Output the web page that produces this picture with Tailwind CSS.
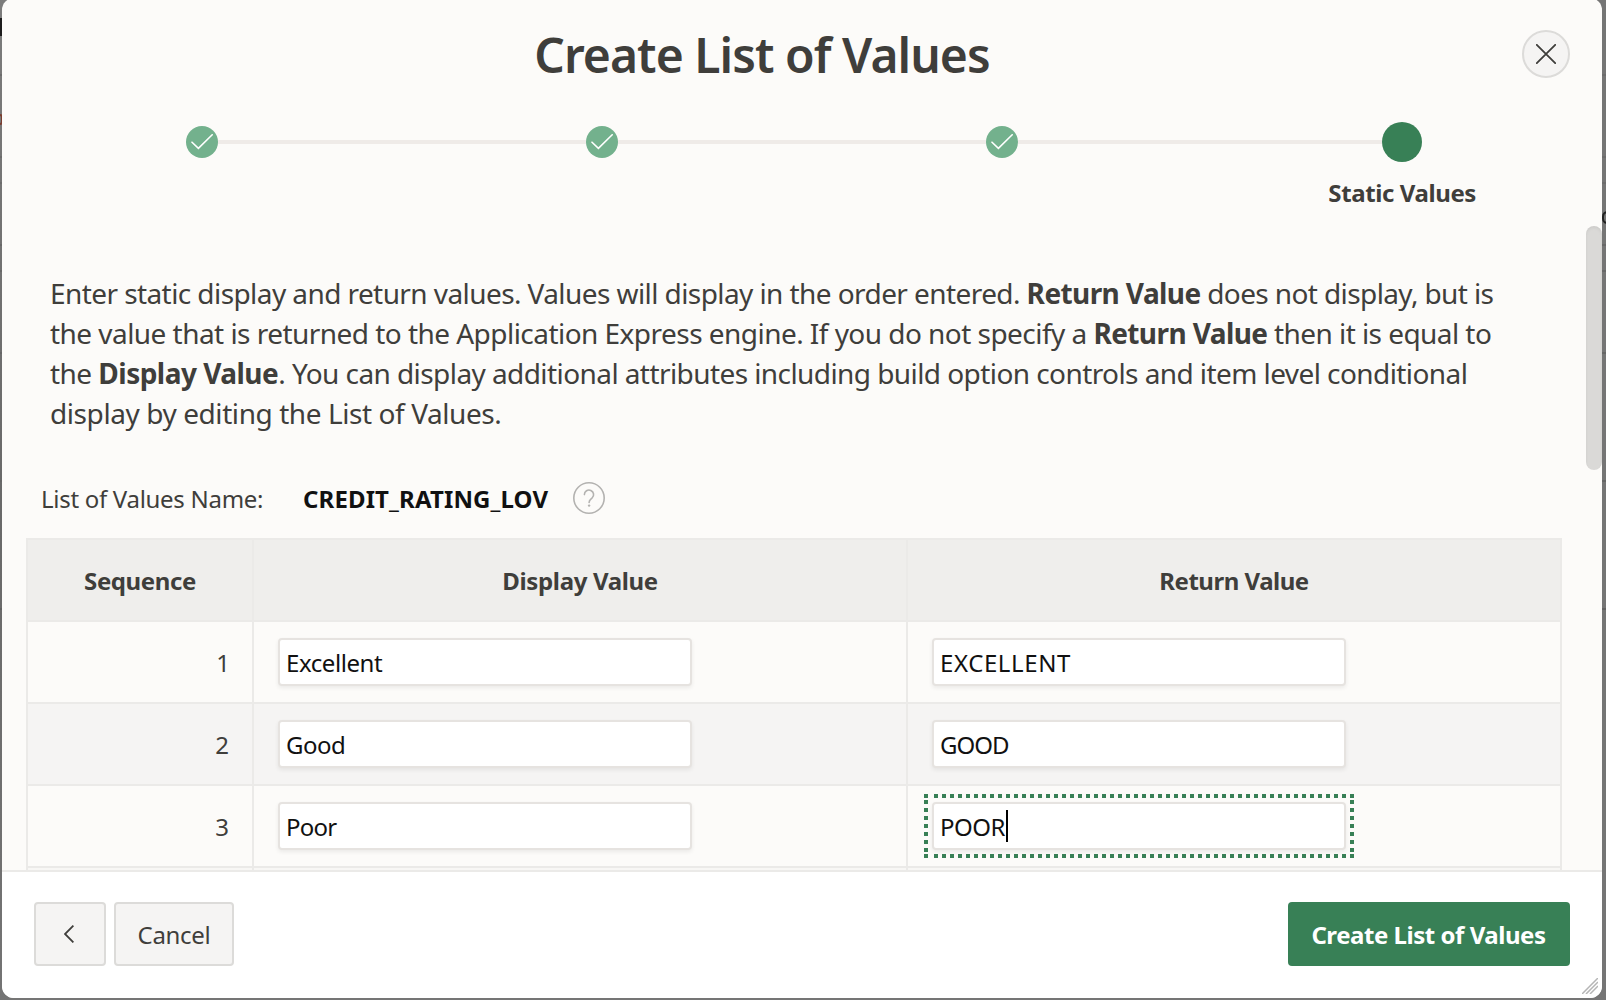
<!DOCTYPE html>
<html lang="en">
<head>
<meta charset="utf-8">
<title>Create List of Values</title>
<script src="https://cdn.jsdelivr.net/npm/@tailwindcss/browser@4"></script>
</head>
<body class="relative h-[1000px] w-[1606px] overflow-hidden bg-[#757575] font-['Noto_Sans',sans-serif] text-[24px] leading-8 text-[#3f3e3b]">
  <!-- dimmed page behind the dialog -->
  <div class="absolute inset-0">
    <div class="absolute inset-y-0 left-0 w-2 bg-linear-to-b from-[#7c7c7c] via-[#696969] to-[#747474]"></div>
    <div class="absolute top-[74px] left-0 h-[2px] w-full bg-[#6c6c6c]"></div>
    <div class="absolute top-[156px] left-0 h-[2px] w-full bg-[#6c6c6c]"></div>
    <div class="absolute top-[182px] left-0 h-[2px] w-full bg-[#6c6c6c]"></div>
    <div class="absolute top-[244px] left-0 h-[2px] w-full bg-[#686868]"></div>
    <div class="absolute top-[270px] left-0 h-[2px] w-full bg-[#686868]"></div>
    <div class="absolute top-[352px] left-0 h-[2px] w-full bg-[#666]"></div>
    <div class="absolute top-[480px] left-0 h-[2px] w-full bg-[#666]"></div>
    <div class="absolute top-[608px] left-0 h-[2px] w-full bg-[#626262]"></div>
    <div class="absolute top-[18px] left-0 h-[18px] w-[3px] bg-[#1d1d1d]"></div>
    <div class="absolute top-[114px] -left-[8px] h-[11px] w-[11px] rounded-[3px] border-2 border-[#7b3d2f]"></div>
    <div class="absolute top-[211px] left-[1602px] h-[13px] w-[11px] rounded-full border-2 border-[#222]"></div>
  </div>

  <div role="dialog" class="relative -top-[2px] ml-[2px] flex h-[1000px] w-[1600px] flex-col overflow-hidden rounded-xl bg-[#fcfbf9]">
    <header class="relative h-[220px] shrink-0">
      <div class="flex justify-center pt-[25px] pr-[80px]">
        <h1 class="text-[48px] leading-[64px] font-semibold tracking-[-0.95px]">Create List of Values</h1>
      </div>
      <button aria-label="Close" class="absolute top-8 right-8 flex size-12 items-center justify-center rounded-full border-2 border-[#dcdbd9] bg-[#f5f4f3]">
        <svg class="size-5" viewBox="0 0 20 20" fill="none" stroke="#3f3e3b" stroke-width="1.8" stroke-linecap="round"><path d="M.8 .8 19.2 19.2M19.2 .8 .8 19.2"/></svg>
      </button>
      <!-- progress train -->
      <div class="mt-[35px] flex h-10 items-center pl-[184px]">
        <span class="flex size-8 items-center justify-center rounded-full bg-[#73b18d]"><svg class="h-4 w-[22px]" viewBox="0 0 22 16" fill="none" stroke="#fff" stroke-width="1.6" stroke-linecap="round"><path d="M1 8.200 7.400 14.400 21.200 .8"/></svg></span>
        <span class="h-1 w-[368px] bg-[#efebe8]"></span>
        <span class="flex size-8 items-center justify-center rounded-full bg-[#73b18d]"><svg class="h-4 w-[22px]" viewBox="0 0 22 16" fill="none" stroke="#fff" stroke-width="1.6" stroke-linecap="round"><path d="M1 8.200 7.400 14.400 21.200 .8"/></svg></span>
        <span class="h-1 w-[368px] bg-[#efebe8]"></span>
        <span class="flex size-8 items-center justify-center rounded-full bg-[#73b18d]"><svg class="h-4 w-[22px]" viewBox="0 0 22 16" fill="none" stroke="#fff" stroke-width="1.6" stroke-linecap="round"><path d="M1 8.200 7.400 14.400 21.200 .8"/></svg></span>
        <span class="h-1 w-[364px] bg-[#efebe8]"></span>
        <span class="size-10 rounded-full bg-[#388056]"></span>
      </div>
      <div class="flex justify-end pt-[15px] pr-[126px]">
        <span class="font-bold tracking-[-0.4px]">Static Values</span>
      </div>
    </header>

    <div class="relative h-[652px] overflow-hidden">
      <div class="absolute top-2 right-0 h-[244px] w-4 rounded-full bg-[#dad9d7] shadow-[inset_0_2px_3px_rgba(0,0,0,0.06)]"></div>

      <p class="pt-[55px] pl-[48px] text-[28px] leading-10 whitespace-nowrap">
        <span class="block"><span class="tracking-[-0.58px]">Enter static display and return values. Values will display in the order entered. </span><b class="tracking-[-0.6px]">Return Value </b><span class="tracking-[-0.61px]">does not display, but is</span></span>
        <span class="block"><span class="tracking-[-0.54px]">the value that is returned to the Application Express engine. If you do not specify a </span><b class="tracking-[-0.6px]">Return Value </b><span class="tracking-[-0.56px]">then it is equal to</span></span>
        <span class="block"><span class="tracking-[-0.54px]">the </span><b class="tracking-[-0.52px]">Display Value</b><span class="tracking-[-0.577px]">. You can display additional attributes including build option controls and item level conditional</span></span>
        <span class="block tracking-[-0.42px]">display by editing the List of Values.</span>
      </p>

      <div class="mt-[50px] flex h-8 items-center pl-[39px]">
        <span class="w-[262px] tracking-[-0.29px]">List of Values Name:</span>
        <b class="w-[270px] tracking-[0.12px] text-[#111]">CREDIT_RATING_LOV</b>
        <svg class="relative -top-px size-8" viewBox="0 0 32 32" fill="none" stroke="#b3b2b0"><circle cx="16" cy="16" r="15.2" stroke-width="1.6"/><path d="M11.4 12.6a4.6 4.6 0 1 1 7.7 3.4c-1.8 1.600-3 2-3 4.400" stroke-width="1.6" stroke-linecap="round"/><circle cx="16.1" cy="23.6" r="1.2" fill="#b3b2b0" stroke="none"/></svg>
      </div>

      <div class="mt-[23px] ml-6 grid w-[1536px] grid-cols-[226px_654px_654px] border-t-2 border-l-2 border-[#ebeae8] *:flex *:h-[82px] *:items-center *:border-r-2 *:border-b-2 *:border-[#ebeae8]">
        <div class="justify-center bg-[#efeeec] pt-[2px] font-bold tracking-[-0.38px]">Sequence</div>
        <div class="justify-center bg-[#efeeec] pt-[2px] font-bold tracking-[-0.36px]">Display Value</div>
        <div class="justify-center bg-[#efeeec] pt-[2px] font-bold tracking-[-0.49px]">Return Value</div>

        <div class="justify-end pt-[2px] pr-[22px]">1</div>
        <div class="pl-6"><div class="flex h-12 w-[414px] items-center rounded-[4px] border-2 border-[#e6e3e0] bg-white pt-[2px] pl-[6px] tracking-[-0.42px] text-[#111] shadow-[0_2px_4px_rgba(0,0,0,0.07)]">Excellent</div></div>
        <div class="pl-6"><div class="flex h-12 w-[414px] items-center rounded-[4px] border-2 border-[#e6e3e0] bg-white pt-[2px] pl-[6px] tracking-[0.6px] text-[#111] shadow-[0_2px_4px_rgba(0,0,0,0.07)]">EXCELLENT</div></div>

        <div class="justify-end bg-[#f5f4f3] pt-[2px] pr-[23px]">2</div>
        <div class="bg-[#f5f4f3] pl-6"><div class="flex h-12 w-[414px] items-center rounded-[4px] border-2 border-[#e6e3e0] bg-white pt-[2px] pl-[6px] tracking-[-0.5px] text-[#111] shadow-[0_2px_4px_rgba(0,0,0,0.07)]">Good</div></div>
        <div class="bg-[#f5f4f3] pl-6"><div class="flex h-12 w-[414px] items-center rounded-[4px] border-2 border-[#e6e3e0] bg-white pt-[2px] pl-[6px] tracking-[-1px] text-[#111] shadow-[0_2px_4px_rgba(0,0,0,0.07)]">GOOD</div></div>

        <div class="justify-end pt-[2px] pr-[23px]">3</div>
        <div class="pl-6"><div class="flex h-12 w-[414px] items-center rounded-[4px] border-2 border-[#e6e3e0] bg-white pt-[2px] pl-[6px] tracking-[-0.8px] text-[#111] shadow-[0_2px_4px_rgba(0,0,0,0.07)]">Poor</div></div>
        <div class="pl-6">
          <div class="relative flex h-12 w-[414px] items-center rounded-[4px] border-2 border-[#e6e3e0] bg-white pt-[2px] pl-[6px] tracking-[-0.5px] text-[#111] shadow-[0_2px_4px_rgba(0,0,0,0.07)]">POOR
            <span class="absolute top-[6px] left-[72px] h-8 w-[2px] bg-black"></span>
            <svg class="absolute -top-[10px] -left-[10px] h-16 w-[430px]" viewBox="0 0 430 64" fill="none" stroke="#388056" stroke-width="4" stroke-dasharray="4 4"><path d="M10 2H430M10 62H430M2 6V58M428 6V58M0 2H4M0 62H4"/></svg>
          </div>
        </div>

        <div class="bg-[#f8f7f5]"></div><div class="bg-[#f8f7f5]"></div><div class="bg-[#f8f7f5]"></div>
      </div>
    </div>

    <footer class="relative flex h-[128px] shrink-0 grow items-start gap-2 border-t-2 border-[#ebeae8] bg-white px-8 pt-[30px]">
      <button aria-label="Back" class="flex h-16 w-[72px] items-center justify-center rounded-[4px] border-2 border-[#dcdbd9] bg-[#f5f4f3] pr-[2px]">
        <svg class="h-[18px] w-[10px]" viewBox="0 0 10 18" fill="none" stroke="#3f3e3b" stroke-width="1.8"><path d="M9.400 .6 1 9l8.400 8.400"/></svg>
      </button>
      <button class="h-16 w-[120px] rounded-[4px] border-2 border-[#dcdbd9] bg-[#f5f4f3] pt-[2px] tracking-[-0.3px]">Cancel</button>
      <button class="ml-auto h-16 w-[282px] rounded-[4px] bg-[#388056] pt-[2px] pr-px font-bold tracking-[-0.46px] text-white">Create List of Values</button>
      <svg class="absolute right-1 bottom-1 size-4" viewBox="0 0 16 16" fill="none" stroke="#b5b5b5" stroke-width="1.5"><path d="M0 16 16 0M4 16 16 4M8 16 16 8"/></svg>
    </footer>
  </div>
</body>
</html>
